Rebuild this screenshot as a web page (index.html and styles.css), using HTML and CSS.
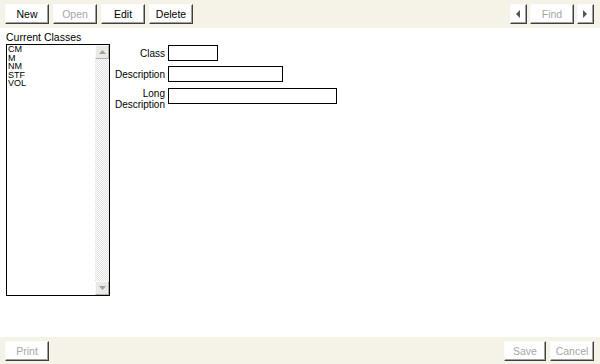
FILE: index.html
```html
<!DOCTYPE html>
<html lang="en">
<head>
    <meta charset="UTF-8">
    <title>Classes</title>
    <link rel="stylesheet" href="styles.css">
</head>
<body>
    <div class="page">
        <div class="toolbar">
            <div class="group">
                <button class="btn">New</button>
                <button class="btn" disabled>Open</button>
                <button class="btn">Edit</button>
                <button class="btn">Delete</button>
            </div>
            <div class="group nav">
                <button class="btn arrow">
                    <svg width="5" height="8" viewBox="0 0 5 8"><path d="M4 0 L0 4 L4 8 Z" fill="#555"/></svg>
                </button>
                <button class="btn find" disabled>Find</button>
                <button class="btn arrow">
                    <svg width="5" height="8" viewBox="0 0 5 8"><path d="M0 0 L4 4 L0 8 Z" fill="#555"/></svg>
                </button>
            </div>
        </div>

        <div class="content">
            <div class="list-col">
                <div class="list-label">Current Classes</div>
                <div class="listbox">
                    <ul class="items">
                        <li>CM</li>
                        <li>M</li>
                        <li>NM</li>
                        <li>STF</li>
                        <li>VOL</li>
                    </ul>
                    <div class="scrollbar">
                        <div class="sb-btn">
                            <svg width="7" height="4" viewBox="0 0 7 4"><path d="M0 4 L3.5 0 L7 4 Z" fill="#a0a0a0"/></svg>
                        </div>
                        <div class="sb-track"></div>
                        <div class="sb-btn">
                            <svg width="7" height="4" viewBox="0 0 7 4"><path d="M0 0 L3.5 4 L7 0 Z" fill="#a0a0a0"/></svg>
                        </div>
                    </div>
                </div>
            </div>

            <div class="form">
                <label class="lbl">Class</label>
                <input class="field short" type="text">
                <label class="lbl">Description</label>
                <input class="field mid" type="text">
                <label class="lbl two">Long<br>Description</label>
                <input class="field long" type="text">
            </div>
        </div>

        <div class="toolbar bottom">
            <div class="group">
                <button class="btn" disabled>Print</button>
            </div>
            <div class="group">
                <button class="btn save" disabled>Save</button>
                <button class="btn" disabled>Cancel</button>
            </div>
        </div>
    </div>
</body>
</html>
```

FILE: styles.css
```css
* {
    box-sizing: border-box;
}
body {
    margin: 0;
    font-family: "Liberation Sans", Arial, sans-serif;
    font-size: 10px;
    color: #000;
    background: #fff;
}
.page {
    display: flex;
    flex-direction: column;
    height: 364px;
}
.toolbar {
    display: flex;
    justify-content: space-between;
    align-items: flex-start;
    height: 28px;
    padding: 4px 6px 0 5px;
    background-color: #f5f2e7;
}
.toolbar.bottom {
    height: 27px;
    padding-top: 4px;
}
.group {
    display: flex;
    gap: 4px;
}
.btn {
    width: 44px;
    height: 20px;
    padding: 0;
    font-family: inherit;
    font-size: 10.5px;
    color: #000;
    background: #fff;
    border: 1px solid;
    border-color: #fbfbfb #404040 #404040 #fbfbfb;
    box-shadow: inset -1px -1px 0 #a0a0a0;
}
.btn:disabled {
    color: #a6a6a6;
}
.nav {
    gap: 3px;
}
.btn.arrow {
    width: 17px;
    display: flex;
    align-items: center;
    justify-content: center;
}
.btn.find {
    width: 44px;
}
.btn.save {
    width: 42px;
}
.content {
    flex: 1;
    display: flex;
    padding: 3px 0 0 6px;
}
.list-label {
    height: 12px;
    line-height: 12px;
    font-size: 10.5px;
}
.listbox {
    display: flex;
    width: 104px;
    height: 252px;
    margin-top: 1px;
    border: 1px solid #000;
}
.items {
    flex: 1;
    list-style: none;
    margin: 0;
    padding: 0 0 0 1px;
    font-size: 9px;
    line-height: 8.5px;
}
.scrollbar {
    width: 14px;
    display: flex;
    flex-direction: column;
}
.sb-btn {
    height: 14px;
    display: flex;
    align-items: center;
    justify-content: center;
    background: #eaeae6;
    border: 1px solid;
    border-color: #fafafa #b0b0b0 #b0b0b0 #fafafa;
}
.sb-track {
    flex: 1;
    background: repeating-conic-gradient(#e2e2e2 0 25%, #fdfdfd 0 50%) 0 0 / 2px 2px;
}
.form {
    display: grid;
    grid-template-columns: 55px auto;
    column-gap: 3px;
    row-gap: 5px;
    align-content: start;
    align-items: center;
    margin-top: 14px;
}
.lbl {
    text-align: right;
    line-height: 11px;
}
.lbl.two {
    align-self: start;
    margin-top: 1px;
}
.form .field:last-child {
    align-self: start;
    margin-top: 1px;
}
.field {
    height: 16px;
    margin: 0;
    padding: 0;
    border: 1px solid #000;
    background: #fff;
    justify-self: start;
}
.field.short {
    width: 50px;
}
.field.mid {
    width: 115px;
}
.field.long {
    width: 169px;
}
```
